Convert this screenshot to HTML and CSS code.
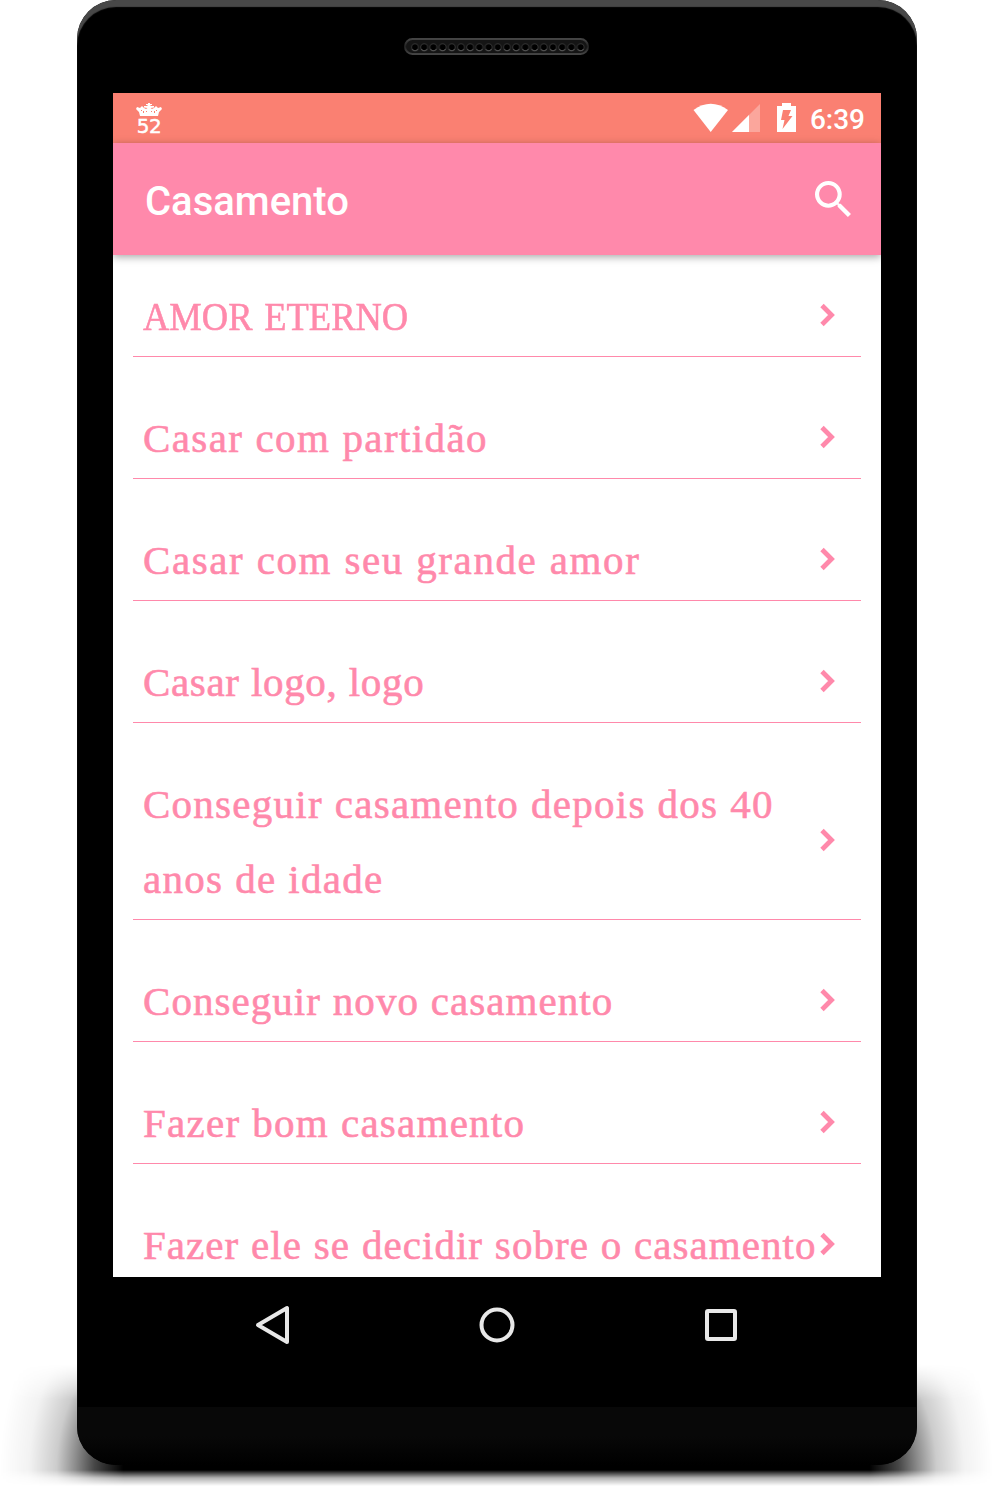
FILE: index.html
```
<!DOCTYPE html>
<html lang="pt-BR">
<head>
    <meta charset="UTF-8">
    <meta name="viewport" content="width=device-width, initial-scale=1.0">
    <title>Casamento</title>
    <link rel="stylesheet" href="styles.css">
</head>
<body>
    <div class="phone">
        <div class="floor-shadow"></div>
        <div class="frame">
            <div class="top-bezel">
                <svg class="speaker" width="185" height="17" viewBox="0 0 185 17">
                    <defs>
                        <pattern id="holes" x="6" y="0" width="9.2" height="17" patternUnits="userSpaceOnUse">
                            <circle cx="5" cy="9.3" r="3.5" fill="#000" stroke="#333" stroke-width="1"/>
                            <path d="M2 11 Q5 14.5 8 11" fill="none" stroke="#555" stroke-width="1"/>
                        </pattern>
                        <linearGradient id="rim" x1="0" y1="0" x2="0" y2="1">
                            <stop offset="0" stop-color="#444"/>
                            <stop offset="0.5" stop-color="#222"/>
                            <stop offset="1" stop-color="#444"/>
                        </linearGradient>
                    </defs>
                    <rect x="1" y="1" width="183" height="15" rx="7.5" fill="#151515" stroke="url(#rim)" stroke-width="2"/>
                    <rect x="6" y="3" width="174.8" height="12" fill="url(#holes)"/>
                </svg>
            </div>
            <div class="screen">
                <div class="status-bar">
                    <div class="badge">
                        <svg width="26" height="14" viewBox="0 0 26 14" fill="#fff">
                            <path d="M4 13 L3 9 L0 6 L1 4 L4 5 L6 3 L8 5 L10 6 L11.5 5 L8 4.5 V3 H11.5 V2 H10 V1 H12 V0 H14 V1 H16 V2 H14.5 V3 H18 V4.5 L14.5 5 L16 6 L18 5 L20 3 L22 5 L25 4 L26 6 L23 9 L22 13 Z"/>
                            <path d="M5 7h1v1h-1z M7 8h1v2h-1z M10 8h1v1h-1z M15 8h1v1h-1z M18 8h1v2h-1z M20 7h1v1h-1z" fill="#fa8072"/>
                        </svg>
                        <span>52</span>
                    </div>
                    <svg class="signals" width="104" height="30" viewBox="0 0 104 30" fill="#fff">
                        <path d="M0.5 7 Q17.7 -5.5 35 7 L17.7 29 Z"/>
                        <path d="M67 1 V29 H39 Z" fill-opacity="0.3"/>
                        <path d="M56 12 V29 H39 Z"/>
                        <path d="M84 3h5V0h9v3h5v26H84z"/>
                        <path d="M90 7 H98 L95.5 13 H99.5 L89.5 26 L91.5 17 H88 Z" fill="#fa8072"/>
                    </svg>
                    <span class="clock">6:39</span>
                </div>
                <div class="app-bar">
                    <h1>Casamento</h1>
                    <svg width="36" height="36" viewBox="3 3 17.5 17.5" fill="#fff">
                        <path d="M15.5 14h-.79l-.28-.27A6.47 6.47 0 0 0 16 9.5 6.5 6.5 0 1 0 9.5 16c1.61 0 3.09-.59 4.23-1.57l.27.28v.79l5 4.99L20.49 19l-4.99-5zm-6 0C7.01 14 5 11.99 5 9.5S7.01 5 9.5 5 14 7.01 14 9.5 11.99 14 9.5 14z"/>
                    </svg>
                </div>
                <ul class="list">
                    <li class="caps"><span>AMOR ETERNO</span><svg class="chevron" viewBox="0 0 16 24"><path d="M2 2.5 L11.5 12 L2 21.5"/></svg></li>
                    <li class="loose"><span>Casar com partidão</span><svg class="chevron" viewBox="0 0 16 24"><path d="M2 2.5 L11.5 12 L2 21.5"/></svg></li>
                    <li class="looser"><span>Casar com seu grande amor</span><svg class="chevron" viewBox="0 0 16 24"><path d="M2 2.5 L11.5 12 L2 21.5"/></svg></li>
                    <li class="tight"><span>Casar logo, logo</span><svg class="chevron" viewBox="0 0 16 24"><path d="M2 2.5 L11.5 12 L2 21.5"/></svg></li>
                    <li><span>Conseguir casamento depois dos 40<br>anos de idade</span><svg class="chevron" viewBox="0 0 16 24"><path d="M2 2.5 L11.5 12 L2 21.5"/></svg></li>
                    <li class="snug"><span>Conseguir novo casamento</span><svg class="chevron" viewBox="0 0 16 24"><path d="M2 2.5 L11.5 12 L2 21.5"/></svg></li>
                    <li><span>Fazer bom casamento</span><svg class="chevron" viewBox="0 0 16 24"><path d="M2 2.5 L11.5 12 L2 21.5"/></svg></li>
                    <li class="snug"><span>Fazer ele se decidir sobre o casamento</span><svg class="chevron" viewBox="0 0 16 24"><path d="M2 2.5 L11.5 12 L2 21.5"/></svg></li>
                </ul>
            </div>
            <div class="nav-bar">
                <svg width="36" height="40" viewBox="0 0 36 40"><path d="M3 20 L32 3 V37 Z"/></svg>
                <svg width="36" height="40" viewBox="0 0 36 40"><circle cx="18" cy="20" r="15.5"/></svg>
                <svg width="36" height="40" viewBox="0 0 36 40"><rect x="4" y="6" width="28" height="28" rx="1"/></svg>
            </div>
            <div class="chin"></div>
        </div>
    </div>
</body>
</html>
```
FILE: styles.css
```
* {
    margin: 0;
    padding: 0;
    box-sizing: border-box;
}

body {
    background-color: #fff;
    font-family: Roboto, sans-serif;
    overflow: hidden;
}

.phone {
    position: relative;
    width: 993px;
    height: 1490px;
    padding: 0 76px 0 77px;
    overflow: hidden;
}

.floor-shadow {
    position: absolute;
    left: 0;
    right: 0;
    top: 1364px;
    height: 124px;
    background:
        radial-gradient(ellipse 145px 210px at 145px 105px, #000 15%, rgba(0, 0, 0, 0.72) 35%, rgba(0, 0, 0, 0.45) 48%, rgba(0, 0, 0, 0.2) 61%, rgba(0, 0, 0, 0.05) 80%, transparent) left / 145px 100% no-repeat,
        radial-gradient(ellipse 145px 210px at 0 105px, #000 15%, rgba(0, 0, 0, 0.72) 35%, rgba(0, 0, 0, 0.45) 48%, rgba(0, 0, 0, 0.2) 61%, rgba(0, 0, 0, 0.05) 80%, transparent) right / 145px 100% no-repeat,
        linear-gradient(#000, #000) center / 703px 100% no-repeat;
    mask-image: linear-gradient(transparent, #000 35px, #000 106px, rgba(0, 0, 0, 0.3) 114px, transparent 122px);
}

.frame {
    position: relative;
    width: 840px;
    height: 1465px;
    background-color: #000;
    border-radius: 39px;
    box-shadow: inset 0 7px 1px #484848;
    display: flex;
    flex-direction: column;
    overflow: hidden;
}

.top-bezel {
    height: 93px;
    padding: 38px 1px 0 0;
}

.speaker {
    display: block;
    margin: 0 auto;
}

.screen {
    width: 768px;
    height: 1184px;
    margin: 0 auto;
    background-color: #fff;
    overflow: hidden;
}

.status-bar {
    height: 50px;
    background: #fa8072;
    color: #fff;
    display: flex;
    align-items: center;
    padding: 0 16px 0 23px;
}

.badge {
    width: 26px;
    margin-right: auto;
    padding-top: 2px;
    text-align: center;
}

.badge svg {
    display: block;
}

.badge span {
    display: block;
    font-family: "DejaVu Sans", sans-serif;
    font-size: 20px;
    line-height: 19px;
    letter-spacing: -0.5px;
    -webkit-text-stroke: 0.5px #fff;
}

.clock {
    margin-left: 13px;
    padding-top: 2px;
    font-size: 28px;
    font-weight: 500;
}

.app-bar {
    position: relative;
    height: 112px;
    padding: 0 30px 0 32px;
    background-color: #ff89ab;
    color: #fff;
    box-shadow: 0 2px 8px rgba(0, 0, 0, 0.35);
    display: flex;
    align-items: center;
    justify-content: space-between;
}

.app-bar h1 {
    font-size: 40px;
    font-weight: 500;
    padding-top: 4px;
}

.list {
    list-style: none;
    padding: 19px 20px 0;
    display: flex;
    flex-direction: column;
    gap: 39px;
}

.list li {
    display: flex;
    align-items: center;
    justify-content: space-between;
    padding: 5px 25px 2px 10px;
    border-bottom: 1px solid #ff89ab;
    color: #ff89ab;
    font-family: "Liberation Serif", serif;
    font-size: 41px;
    line-height: 75px;
    letter-spacing: 1.25px;
    word-spacing: 0.5px;
    white-space: nowrap;
    -webkit-text-stroke: 0.6px #ff89ab;
}

.list .caps {
    letter-spacing: 0;
    word-spacing: 3px;
}

.list .caps span {
    transform: scaleX(0.89);
    transform-origin: left;
}

.list .loose {
    letter-spacing: 1.4px;
}

.list .looser {
    letter-spacing: 1.6px;
}

.list .tight {
    letter-spacing: 0.65px;
}

.list .snug {
    letter-spacing: 1.05px;
}

.chevron {
    flex: none;
    width: 16px;
    height: 24px;
    margin-bottom: 4px;
    fill: none;
    stroke: #ff89ab;
    stroke-width: 4.8;
}

.nav-bar {
    height: 96px;
    padding: 0 178px;
    display: flex;
    align-items: center;
    justify-content: space-between;
}

.nav-bar svg {
    fill: none;
    stroke: #e8e8e8;
    stroke-width: 4;
    stroke-linejoin: round;
}

.chin {
    height: 58px;
    margin-top: auto;
    background: linear-gradient(#080808 50%, #000);
}
```
